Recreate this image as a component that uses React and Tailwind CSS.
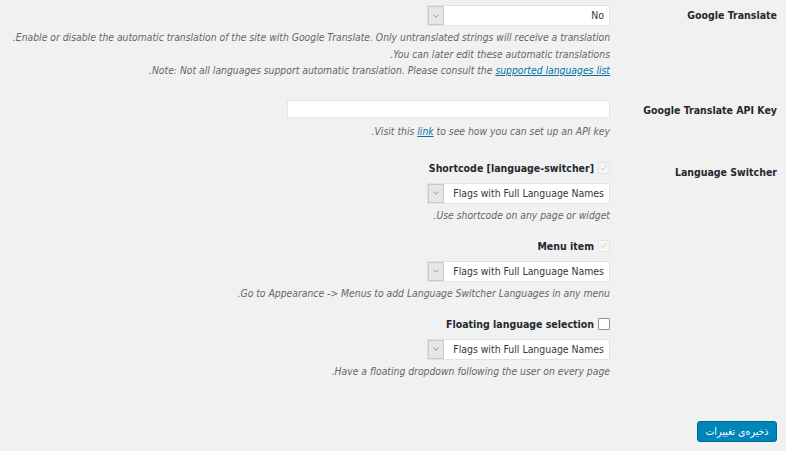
import React from 'react';

const Chevron = () => (
  <svg width="6" height="4" viewBox="0 0 6 4" fill="none">
    <path d="M0.5 0.8 L3 3.2 L5.5 0.8" stroke="#8a8a8a" strokeWidth="0.9" />
  </svg>
);

const Select = ({ value }) => (
  <div className="flex h-[21px] w-[183px] border border-[#e2e2e2] bg-white">
    <span className="flex-1 pr-[5px] leading-[19px] text-[10.4px] text-[#32373c]">{value}</span>
    <span className="flex w-[16px] items-center justify-center border border-[#c9c9c9] bg-[#e6e6e6]">
      <Chevron />
    </span>
  </div>
);

const Checkbox = ({ checked }) =>
  checked ? (
    <span className="flex h-[12px] w-[12px] items-center justify-center border border-[#e4e4e4] bg-[#f6f6f6]">
      <svg width="8" height="7" viewBox="0 0 8 7" fill="none">
        <path d="M1 3.6 L3 5.6 L7 1" stroke="#dadada" strokeWidth="1.1" />
      </svg>
    </span>
  ) : (
    <span className="h-[12px] w-[12px] rounded-[1px] border border-[#8c8f94] bg-white" />
  );

const Desc = ({ className = '', children }) => (
  <p className={`text-[10.3px] italic leading-[16.5px] text-[#666] ${className}`}>{children}</p>
);

const Label = ({ className = '', children }) => (
  <div className={`w-[176px] shrink-0 pr-[9px] text-[10.5px] font-bold leading-[16px] text-[#23282d] ${className}`}>
    {children}
  </div>
);

const SwitchOption = ({ title, checked, note, className = '' }) => (
  <div className={className}>
    <div className="flex items-center gap-[4px] text-[10.5px] font-bold leading-[16px] text-[#23282d]">
      <Checkbox checked={checked} />
      <span>{title}</span>
    </div>
    <div className="mt-[7px]">
      <Select value="Flags with Full Language Names" />
    </div>
    <Desc className="mt-[3px] leading-[16px]">{note}</Desc>
  </div>
);

export default function App() {
  return (
    <div
      dir="rtl"
      className="h-[451px] w-full bg-[#f1f1f1] pt-[5px] font-['DejaVu_Sans_Condensed','DejaVu_Sans',sans-serif]"
    >
      <div className="flex">
        <Label className="pt-[2px]">Google Translate</Label>
        <div className="flex-1">
          <Select value="No" />
          <Desc className="mt-[3px]">
            Enable or disable the automatic translation of the site with Google Translate. Only untranslated strings will receive a translation.
            <br />
            You can later edit these automatic translations.
            <br />
            Note: Not all languages support automatic translation. Please consult the{' '}
            <a className="text-[#0073aa] underline">supported languages list</a>.
          </Desc>
        </div>
      </div>

      <div className="mt-[21px] flex">
        <Label className="pt-[2px]">Google Translate API Key</Label>
        <div className="flex-1">
          <div className="h-[18px] w-[323px] border border-[#e4e4e4] bg-white" />
          <Desc className="mt-[5px] leading-[16px]">
            Visit this <a className="text-[#0073aa] underline">link</a> to see how you can set up an API key.
          </Desc>
        </div>
      </div>

      <div className="mt-[21px] flex">
        <Label className="pt-[4px]">Language Switcher</Label>
        <div className="flex-1">
          <SwitchOption title="Shortcode [language-switcher]" checked note="Use shortcode on any page or widget." />
          <SwitchOption
            className="mt-[15px]"
            title="Menu item"
            checked
            note="Go to Appearance -> Menus to add Language Switcher Languages in any menu."
          />
          <SwitchOption
            className="mt-[15px]"
            title="Floating language selection"
            note="Have a floating dropdown following the user on every page."
          />
        </div>
      </div>

      <div className="mt-[39px] pr-[9px]">
        <button className="h-[21px] w-[80px] rounded-[3px] border border-[#006799] bg-[#0085ba] text-[10.5px] text-white">
          ذخیره‌ی تغییرات
        </button>
      </div>
    </div>
  );
}
